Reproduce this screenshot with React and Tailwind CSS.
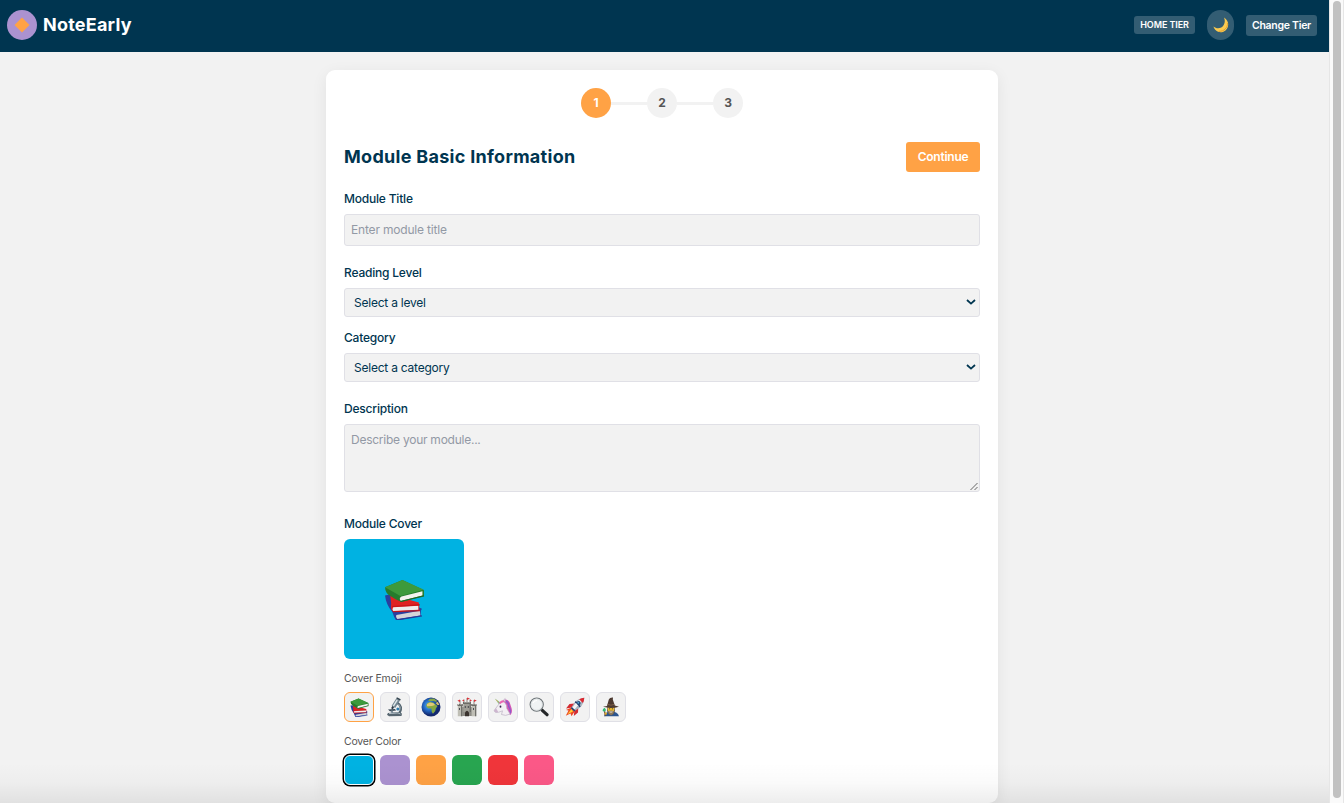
import React from "react";

function Books({ size }) {
  return (
    <svg width={size} height={size} viewBox="0 0 40 40" aria-hidden="true">
      <path d="M1 16 L5 15 L37 29 L36 31 L36 36 L12 40.5 Q10 38 8 32 Q2 25 1 16Z" fill="#2a3f9e" />
      <path d="M12 35 L35 31 L35.5 35.5 L13 39 Q11 37 12 35Z" fill="#d4d4d8" />
      <path d="M12 40 L37 36" stroke="#263b98" strokeWidth="1.2" />
      <path d="M6 15 L34 23 L34.5 30 L9 32 Q6 30 7 24Z" fill="#e02222" />
      <path d="M9 27.5 L33.5 26 L33.5 30 L9 31.2 Q7.5 29.5 9 27.5Z" fill="#eeeeee" />
      <path d="M8 26.8 L35 25.2 M8.5 32 L35 30.8" stroke="#c4161b" strokeWidth="1.1" />
      <path d="M1 8 L18 1 L39 11 L39 16.5 L17 22.5 Q11 20 7 17 Q1 14 1 8Z" fill="#267c2d" />
      <path d="M1 8 L18 1 L39 10.5 L16 16.5Z" fill="#3d9a3c" />
      <path d="M17 17 L37.5 12 L37.5 16 L16.5 21.5 Q14 19 17 17Z" fill="#f3f3ef" />
      <path d="M16 22 L39 16.5" stroke="#1d6828" strokeWidth="1.1" />
    </svg>
  );
}

function Microscope() {
  return (
    <svg width="20" height="20" viewBox="0 0 20 20" aria-hidden="true">
      <path d="M3 16 L13 15 L17 16.5 L16.5 19 L4 19.3 L2 17.8Z" fill="#56656f" />
      <path d="M4 16.6 L13 15.9 L15.5 17" fill="none" stroke="#b3bfc6" />
      <path d="M12.5 6 Q18 9.5 14.5 16" fill="none" stroke="#52636e" strokeWidth="2.4" />
      <path d="M13.5 7 Q16.8 10 14.5 14" fill="none" stroke="#a7b5bd" strokeWidth="0.8" />
      <path d="M3 12.5 L10 12 L11 13.5 L5 14.3Z" fill="#344451" />
      <path d="M6.5 13.5 L7.5 16" stroke="#768793" strokeWidth="2" />
      <path d="M13 2.6 L8.4 9.8" stroke="#71848f" strokeWidth="4.2" />
      <path d="M12.2 3 L8.2 9.3" stroke="#dde5e8" strokeWidth="1.4" />
      <path d="M11.6 0.9 L15.4 3" stroke="#33434e" strokeWidth="1.5" />
      <path d="M8.2 9.5 L7 11.8" stroke="#293743" strokeWidth="2" />
      <circle cx="12.8" cy="12" r="1.5" fill="#2b7cae" />
    </svg>
  );
}

function Globe() {
  return (
    <svg width="20" height="20" viewBox="0 0 20 20" aria-hidden="true">
      <defs>
        <radialGradient id="ocean" cx="38%" cy="42%">
          <stop offset="0" stopColor="#5cb4f4" />
          <stop offset="0.55" stopColor="#2368c4" />
          <stop offset="1" stopColor="#14296e" />
        </radialGradient>
      </defs>
      <circle cx="10" cy="10" r="9.5" fill="url(#ocean)" />
      <path d="M6 6.4 L8.5 5 L12 5.4 L14.5 7.5 L16.5 9 L14.8 11.5 L14.2 14 L12 16.8 L10.8 15 L10.4 11.5 L7 11.2 L5 9Z" fill="#86a840" />
      <path d="M6 7 L9 5.6 L12.5 6.2 L14 8 L11 9 L6 9.2Z" fill="#dfc876" />
      <path d="M7 3.5 L9 1.8 L13 1.4 L16 3.8 L15.4 5 L12 3.9 L9 4.2Z" fill="#86a64b" />
      <path d="M14.6 6 L16.8 4.8 L18.4 8 L16.5 8Z" fill="#d4bf6b" />
    </svg>
  );
}

function Castle() {
  return (
    <svg width="20" height="20" viewBox="0 0 20 20" aria-hidden="true">
      <path d="M5 10 H15 V19 H5Z" fill="#8e8d86" />
      <path d="M6.3 6 H13.7 V15 H6.3Z" fill="#9f9e96" />
      <path d="M0.8 7.5 H5.4 V19.3 H0.8Z M14.6 7.5 H19.2 V19.3 H14.6Z" fill="#bfbeb5" />
      <path d="M4.7 8 V19.3 M18.7 8 V19.3 M13.2 6 V15" stroke="#62625e" strokeWidth="1.1" />
      <path d="M0.5 7 H5.8 V9 H0.5Z M14.2 7 H19.5 V9 H14.2Z M6 5 H14 V7 H6Z" fill="#6d6c67" />
      <path d="M1.5 7 V8 M4 7 V8 M16 7 V8 M18.2 7 V8 M8 5 V6 M10 5 V6 M12 5 V6" stroke="#d8d7d0" strokeWidth="0.8" />
      <path d="M3 7 V3 M10 5 V1 M17 7 V3 M7 5 V2.5 M13 5 V2.5" stroke="#685449" strokeWidth="0.7" />
      <path d="M10 0.4 L13 1.6 L10 3Z M3 2.4 L0.4 3.7 L3 5Z M17 2.4 L19.8 3.6 L17 5Z M7 2.5 L5 3.5 L7 4.5Z M13 2.5 L15 3.5 L13 4.5Z" fill="#dc3138" />
      <path d="M8 19.3 V15.5 Q10 12 12 15.5 V19.3Z" fill="#3a332e" />
      <path d="M2.5 11 V13 M16.5 11 V13 M8.3 9 V11 M11.3 9 V11" stroke="#3d4146" strokeWidth="0.9" />
    </svg>
  );
}

function Unicorn() {
  return (
    <svg width="20" height="20" viewBox="0 0 20 20" aria-hidden="true">
      <path d="M9 4 Q14 0.5 16.5 5 Q17.5 8 18.5 11 Q19.8 15 17.5 18 L14 16 L12 8Z" fill="#d556b4" />
      <path d="M13 4 Q16 5.5 15.7 9.5 Q18 12 17.3 16.5" fill="none" stroke="#8f5ac8" strokeWidth="1.4" />
      <path d="M7 6 L10.5 4 L12 6 Q14.2 8 13.8 11.5 L17 17 Q12.5 19.5 8.5 17.5 L9.5 13.8 L5.5 15.3 Q2 16.2 1 13.8 L4.8 8.5Z" fill="#f3eff3" stroke="#bcb1c3" strokeWidth="0.7" />
      <path d="M1 13.6 L3 11.2 L5.2 14.8 L4 15.5 Q1.6 15.8 1 13.6Z" fill="#cdb6cf" />
      <path d="M1.8 1.4 L7.4 5.4 L5.8 7Z" fill="#72b88c" />
      <path d="M3 2.6 L5.8 5.6" stroke="#e2b45e" strokeWidth="0.9" />
      <path d="M6.6 6.3 Q9 3.6 12 4.4" fill="none" stroke="#ec67b2" strokeWidth="2" />
      <path d="M10.4 3.2 L12.2 1.5 L12.3 5Z" fill="#e8dfea" stroke="#a893b5" strokeWidth="0.5" />
      <ellipse cx="7.5" cy="9.7" rx="0.9" ry="1.1" fill="#34284f" />
    </svg>
  );
}

function Magnifier() {
  return (
    <svg width="20" height="20" viewBox="0 0 20 20" aria-hidden="true">
      <path d="M11.5 11.5 L14 14" stroke="#777d80" strokeWidth="2" />
      <path d="M13.3 13.3 L18 17.7" stroke="#252729" strokeWidth="3.2" strokeLinecap="round" />
      <circle cx="7.7" cy="7.6" r="6.6" fill="#f0f3f4" stroke="#6b7276" strokeWidth="1.1" />
      <circle cx="7.7" cy="7.6" r="5.6" fill="none" stroke="#d2d7d9" strokeWidth="0.6" />
      <path d="M4 6 Q5 3.7 8 3.5" fill="none" stroke="#fff" strokeWidth="1.2" />
    </svg>
  );
}

function Rocket() {
  return (
    <svg width="20" height="20" viewBox="0 0 20 20" aria-hidden="true">
      <path d="M6.5 10.5 L1 13 L3.5 13.5 L0.8 18.8 L5.5 16.5 L6.5 19.3 L10 14Z" fill="#ee4a24" />
      <path d="M6.5 12 L2.4 17.2 L8 14.5Z" fill="#ffce35" />
      <path d="M9.5 6.5 L4.5 7 L1 11.5 L7 10.5Z M13.3 10.5 L13 15.5 L8.8 19 L9.5 13Z" fill="#d32b32" />
      <path d="M6 11 L10 5 Q13 1.6 19.3 0.8 Q19 7 14.8 10.8 L9 14.2Z" fill="#a8b4bf" />
      <path d="M7 11 L11.5 5 L15 2.6 L17 3.8 L9 13Z" fill="#f4f4f4" />
      <path d="M14.2 2.2 Q16.5 0.9 19.3 0.8 Q19.2 3.8 17.8 6Z" fill="#dc2932" />
      <path d="M10 5 Q13 5.5 15 10 M6.3 10.6 L9.8 13.9" fill="none" stroke="#26406f" strokeWidth="1.5" />
      <circle cx="13.6" cy="6.1" r="2" fill="#1e416f" />
      <circle cx="13.3" cy="5.8" r="1" fill="#52a5cf" />
    </svg>
  );
}

function Mage() {
  return (
    <svg width="20" height="20" viewBox="0 0 20 20" aria-hidden="true">
      <path d="M3 19.3 Q4 14.5 10 14.5 Q17 14.5 18 19.3Z" fill="#2b5590" />
      <path d="M6.5 9 H13.5 L14 14 Q13 17.5 10 18.5 Q7 17.5 6 14Z" fill="#6b5a48" />
      <ellipse cx="10" cy="12" rx="3.3" ry="3.6" fill="#e9ba34" />
      <path d="M7 14.3 Q10 12.6 13 14.3 L12 17 L10 18.3 L8 17Z" fill="#8b785d" />
      <path d="M8.5 14.8 Q10 15.6 11.5 14.8" fill="none" stroke="#fff" strokeWidth="0.7" />
      <path d="M6 9 L7.8 2.5 Q8.5 0.4 12 0.6 L11.8 2.5 L13.8 8.5 L18 9.7 Q10 12 2 9.8Z" fill="#4d3a31" />
      <path d="M6.5 7.4 Q10 9 13.3 7.4" fill="none" stroke="#80604a" strokeWidth="1" />
      <circle cx="8.6" cy="11.8" r="0.5" fill="#31261d" />
      <circle cx="11.4" cy="11.8" r="0.5" fill="#31261d" />
      <path d="M2 12 L3.8 10.8 L5 13 L3.8 15 L1.6 14Z" fill="#32b875" />
      <path d="M3.6 14.5 L4.5 19" stroke="#70503c" strokeWidth="1.3" />
      <circle cx="4.8" cy="16.6" r="1.2" fill="#e3ad2b" />
    </svg>
  );
}

function Moon() {
  return (
    <svg width="16" height="16" viewBox="0 0 16 16" aria-hidden="true">
      <path d="M11 0.5 C17 4 16.4 12.3 10.4 14.7 C6 16.4 1.6 14 0.5 9.6 C4 12.6 8.7 11.5 10.7 8 C12.2 5.3 12 2.7 11 0.5Z" fill="#fbcb50" />
      <path d="M14.6 6 C14.8 10.8 10.8 14.7 5.8 14.3" fill="none" stroke="#dc9b30" strokeWidth="0.9" />
    </svg>
  );
}

const label = "mb-1.5 h-[18px] text-[12px] leading-[18px] font-medium tracking-[-0.2px] text-[#003550]";
const field = "w-full rounded-[3px] border border-[#e0e0e6] bg-[#f2f2f2]";

function SelectField({ title, text, className }) {
  return (
    <div className={className}>
      <div className={label}>{title}</div>
      <div className={`${field} flex h-[29px] items-center justify-between pr-[3px] pl-[9px]`}>
        <span className="text-[12px] tracking-[-0.23px] text-[#003550]">{text}</span>
        <svg width="10" height="6" viewBox="0 0 10 6" className="mb-0.5">
          <path d="M1 1 L5 4.6 L9 1" fill="none" stroke="#003550" strokeWidth="1.8" />
        </svg>
      </div>
    </div>
  );
}

function Step({ n, active }) {
  return (
    <div
      className={`flex size-[30px] items-center justify-center rounded-full text-[12px] font-bold ${
        active ? "bg-[#ffa245] text-white" : "bg-[#f2f2f2] text-[#555555]"
      }`}
    >
      {n}
    </div>
  );
}

const emojis = [Microscope, Globe, Castle, Unicorn, Magnifier, Rocket, Mage];

export default function App() {
  return (
    <div className="relative flex h-[803px] w-[1344px] overflow-hidden bg-[#f2f2f2] font-['Inter',sans-serif]">
      <div className="flex w-[1329px] flex-col">
        <header className="flex h-[52px] shrink-0 items-center justify-between bg-[#003550] pr-3 pb-0.5 pl-[7px]">
          <div className="flex items-center gap-1.5">
            <div className="flex size-[30px] items-center justify-center rounded-full bg-[#ab92d0]">
              <svg width="16" height="16" viewBox="0 0 16 16">
                <path d="M8 0.5 L15.5 8 L8 15.5 L0.5 8Z" fill="#ffa245" />
              </svg>
            </div>
            <span className="text-[18px] leading-6 font-bold tracking-[0.22px] text-white">NoteEarly</span>
          </div>
          <div className="flex items-center gap-3">
            <span className="flex h-[18px] w-[61px] items-center justify-center rounded-[3px] bg-[#335d73] text-[9px] font-semibold tracking-[-0.1px] whitespace-nowrap text-white">
              HOME TIER
            </span>
            <span className="flex h-[30px] w-[27px] items-center justify-center rounded-full bg-[#335d73]">
              <Moon />
            </span>
            <span className="flex h-[21px] w-[71px] items-center justify-center rounded-[3px] bg-[#335d73] pt-px text-[10.5px] font-semibold tracking-[-0.28px] whitespace-nowrap text-white">
              Change Tier
            </span>
          </div>
        </header>

        <main className="mt-[18px] ml-[326px] h-[733px] w-[672px] shrink-0 rounded-[9px] bg-white p-[18px] shadow-[0_4px_16px_rgba(0,0,0,0.07)]">
          <div className="flex items-center justify-center">
            <Step n="1" active />
            <div className="h-[3px] w-9 bg-[#f2f2f2]" />
            <Step n="2" />
            <div className="h-[3px] w-9 bg-[#f2f2f2]" />
            <Step n="3" />
          </div>

          <div className="mt-6 flex h-[30px] items-center justify-between">
            <h1 className="pb-0.5 text-[18px] font-bold tracking-[0.29px] text-[#003550]">Module Basic Information</h1>
            <button className="h-[30px] w-[74px] rounded-[3px] bg-[#ffa245] text-[12px] font-semibold tracking-[-0.25px] text-white">
              Continue
            </button>
          </div>

          <div className="mt-[18px]">
            <div className={label}>Module Title</div>
            <div className={`${field} flex h-8 items-center px-1.5`}>
              <span className="text-[12px] tracking-[-0.18px] text-[#9299a5]">Enter module title</span>
            </div>
          </div>
          <SelectField title="Reading Level" text="Select a level" className="mt-[18px]" />
          <SelectField title="Category" text="Select a category" className="mt-3" />
          <div className="mt-[18px]">
            <div className={label}>Description</div>
            <div className={`${field} flex h-[68px] justify-between pl-1.5`}>
              <span className="mt-1.5 text-[12px] leading-[18px] tracking-[-0.25px] text-[#9299a5]">Describe your module...</span>
              <svg width="10" height="10" viewBox="0 0 10 10" className="self-end">
                <path d="M1.5 9 L8.5 2 M5.5 9 L8.5 6" stroke="#666666" strokeWidth="1" />
              </svg>
            </div>
          </div>

          <div className="mt-[23px]">
            <div className={label}>Module Cover</div>
            <div className="flex size-[120px] items-center justify-center rounded-[6px] bg-[#00b2e2]">
              <Books size={41} />
            </div>
          </div>

          <div className="mt-3">
            <div className="mb-1.5 h-[15px] text-[10.5px] leading-[15px] tracking-[-0.17px] text-[#555555]">Cover Emoji</div>
            <div className="flex gap-1.5">
              <div className="flex size-[30px] items-center justify-center rounded-[6px] border border-[#ffa245] bg-[#f2f2f2]">
                <Books size={19} />
              </div>
              {emojis.map((Icon, i) => (
                <div key={i} className="flex size-[30px] items-center justify-center rounded-[6px] border border-[#e0e0e6] bg-[#f2f2f2]">
                  <Icon />
                </div>
              ))}
            </div>
          </div>

          <div className="mt-3">
            <div className="mb-1.5 h-[15px] text-[10.5px] leading-[15px] tracking-[-0.2px] text-[#555555]">Cover Color</div>
            <div className="flex gap-1.5">
              <div className="size-[30px] rounded-[6px] border border-white bg-[#00b2e2] shadow-[0_0_0_1.5px_#000]" />
              <div className="size-[30px] rounded-[6px] bg-[#ab92d0]" />
              <div className="size-[30px] rounded-[6px] bg-[#ffa245]" />
              <div className="size-[30px] rounded-[6px] bg-[#28a550]" />
              <div className="size-[30px] rounded-[6px] bg-[#f0353a]" />
              <div className="size-[30px] rounded-[6px] bg-[#fb5887]" />
            </div>
          </div>
        </main>
      </div>

      <div className="flex w-[15px] justify-center border-x border-[#e6e6e6] bg-[#fafafa] pt-px pb-[5px]">
        <div className="w-2 rounded-full bg-[#c1c1c1]" />
      </div>

      <div className="pointer-events-none absolute bottom-0 left-0 h-10 w-[1329px] bg-linear-to-t from-black/[0.07] via-black/[0.02] to-transparent" />
    </div>
  );
}
